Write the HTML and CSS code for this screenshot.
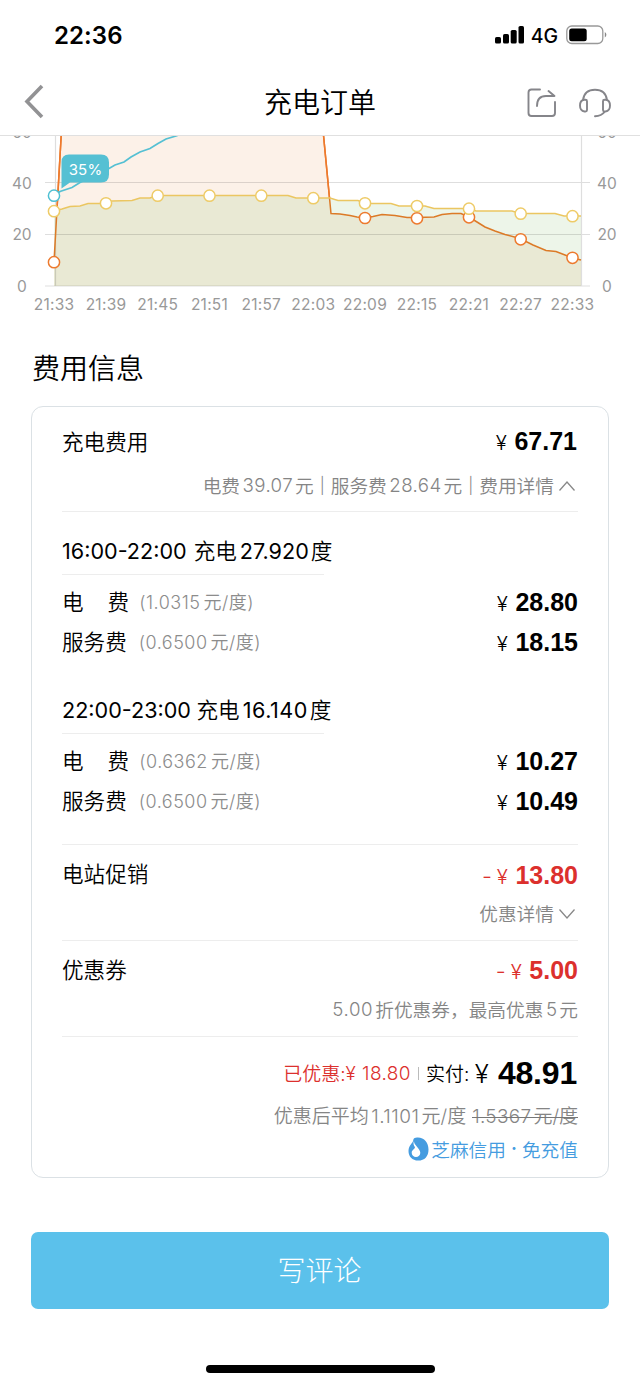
FILE: index.html
```html
<!DOCTYPE html>
<html lang="zh-CN">
<head>
<meta charset="utf-8">
<title>充电订单</title>
<link rel="stylesheet" href="styles.css">
</head>
<body>
<header class="status">
  <span class="clock">22:36</span>
  <span class="status-right">
    <svg width="30" height="20" viewBox="0 0 30 20"><rect x="0" y="12" width="6" height="6.500" rx="1.600"/><rect x="8" y="9" width="6" height="9.500" rx="1.600"/><rect x="15.700" y="5" width="6" height="13.500" rx="1.600"/><rect x="23.500" y="1" width="5.500" height="17.500" rx="1.600"/></svg>
    <span class="network">4G</span>
    <svg class="battery" width="42" height="20" viewBox="0 0 42 20"><rect x=".8" y="1" width="36" height="17.500" rx="5" fill="none" stroke="#999" stroke-width="1.300"/><rect x="3.200" y="3.400" width="17.500" height="12.800" rx="2.500"/><path d="M38.800 7v5.600q1.600-1 1.600-2.800T38.800 7z" fill="#888"/></svg>
  </span>
</header>
<nav class="nav">
  <svg class="back" width="24" height="36" viewBox="0 0 24 36"><path d="M20 3L5 18.500 20 34" fill="none" stroke="#929294" stroke-width="3.600"/></svg>
  <h1>充电订单</h1>
  <div class="nav-icons">
    <svg width="32" height="32" viewBox="0 0 32 32" fill="none" stroke="#85858a" stroke-width="1.900" stroke-linecap="round" stroke-linejoin="round"><path d="M14 2.500H5.500Q2.500 2.500 2.500 5.500V26Q2.500 29 5.500 29H26Q29 29 29 26V15"/><path d="M22.500 4L28.500 9H20Q11 9 11 19"/></svg>
    <svg width="34" height="32" viewBox="0 0 34 32" fill="none" stroke="#85858a" stroke-width="1.900" stroke-linecap="round" stroke-linejoin="round"><path d="M5 13C6 6 11 2.800 17 2.800S28 6 29 13"/><path d="M6 12.700H7.500Q9 12.700 9 14.200V23Q9 24.500 7.500 24.500H6.500Q2 24 2 18.600T6 12.700zM28 12.700H26.500Q25 12.700 25 14.200V23Q25 24.500 26.500 24.500H27.500Q32 24 32 18.600T28 12.700zM27 24.500Q23.500 29 17 29.200"/></svg>
  </div>
</nav>
<main>
<svg class="chart" width="640" height="184" viewBox="0 136 640 184">
  <defs><clipPath id="power"><path d="M54 262L61.500 130H323L331 213.500 340 214 350 215.500 357 217 365 218 373 216.500 382 214.500 395 215.500 407 217.500H417L434 217 442 214.500 452 213.500H461L469 217 477 222 485 227 495 231 505 234.500 520 238.500 533 245 546 250.500 556 251.500 565 255 573 258 581 260V286H54z"/></clipPath></defs>
  <path d="M54 262L61.500 130H323L331 213.500V286H54z" fill="#fcf1e8"/>
  <path d="M54 211L62 209 70 206.500 80 206 88 203.500H106L112 201 132 200.500 140 198H150L157 195.500H288L296 198H330L338 200.500H358L365 203.500H391L399 206H425L434 208.500H470L476 211H512L520 213.500H555L564 216H581V286H54z" fill="#edf5e9"/>
  <path clip-path="url(#power)" d="M54 211L62 209 70 206.500 80 206 88 203.500H106L112 201 132 200.500 140 198H150L157 195.500H288L296 198H330L338 200.500H358L365 203.500H391L399 206H425L434 208.500H470L476 211H512L520 213.500H555L564 216H581V286H54z" fill="#e9e9d4"/>
  <path d="M45 182.500H590M45 234.500H590M45 286H590M55.500 130V286M581.500 130V286" fill="none" stroke="#000" stroke-opacity=".13" stroke-width="1.200"/>
  <path d="M54 262L61.500 130M323 130L331 213.500 340 214 350 215.500 357 217 365 218 373 216.500 382 214.500 395 215.500 407 217.500H417L434 217 442 214.500 452 213.500H461L469 217 477 222 485 227 495 231 505 234.500 520 238.500 533 245 546 250.500 556 251.500 565 255 573 258 581 260" fill="none" stroke="#dc7a27" stroke-width="1.500"/>
  <path d="M57 209L61.500 130M323 130L329.500 198" fill="none" stroke="#f0792d" stroke-width="1.500"/>
  <g class="dot orange"><circle cx="54" cy="262.200" r="5.600"/><circle cx="365" cy="218" r="5.600"/><circle cx="417" cy="218.300" r="5.600"/><circle cx="469" cy="217.300" r="5.600"/><circle cx="520.700" cy="239.300" r="5.600"/><circle cx="572.500" cy="257.800" r="5.600"/></g>
  <path d="M54 211L62 209 70 206.500 80 206 88 203.500H106L112 201 132 200.500 140 198H150L157 195.500H288L296 198H330L338 200.500H358L365 203.500H391L399 206H425L434 208.500H470L476 211H512L520 213.500H555L564 216H581" fill="none" stroke="#ebc661" stroke-width="1.600"/>
  <path d="M54 195.500L60 191.500 72 187.500 80 182.500 109 168.500 115 165 124 162 131 157 140 152 150 148.500 158 143.500 166 139 176 136 184 133" fill="none" stroke="#55c0d3" stroke-width="1.700"/>
  <g class="dot yellow"><circle cx="54" cy="211.200" r="5.600"/><circle cx="106" cy="203.300" r="5.600"/><circle cx="157.700" cy="195.700" r="5.600"/><circle cx="209.500" cy="195.700" r="5.600"/><circle cx="261.300" cy="195.700" r="5.600"/><circle cx="313.300" cy="198.200" r="5.600"/><circle cx="365" cy="203.300" r="5.600"/><circle cx="417" cy="206" r="5.600"/><circle cx="469" cy="208.700" r="5.600"/><circle cx="520.700" cy="213.700" r="5.600"/><circle cx="572.500" cy="216.200" r="5.600"/></g>
  <g class="dot teal"><circle cx="54" cy="195.700" r="5.600"/></g>
  <path d="M69 154.500H101Q109 154.500 109 162.500V174.500Q109 182.500 101 182.500H70L61.500 188.500V162Q61.500 154.500 69 154.500z" fill="#55c0d3"/>
  <text class="tip" x="85.500" y="175">35%</text>
  <g class="axis"><text x="22" y="137.500">60</text><text x="607" y="137.500">60</text><text x="22" y="188.500">40</text><text x="22" y="240.300">20</text><text x="22" y="292">0</text><text x="607" y="188.500">40</text><text x="607" y="240.300">20</text><text x="607" y="292">0</text></g>
  <g class="axis time"><text x="54" y="310">21:33</text><text x="106" y="310">21:39</text><text x="157.700" y="310">21:45</text><text x="209.500" y="310">21:51</text><text x="261.300" y="310">21:57</text><text x="313.300" y="310">22:03</text><text x="365" y="310">22:09</text><text x="417" y="310">22:15</text><text x="469" y="310">22:21</text><text x="520.700" y="310">22:27</text><text x="572.500" y="310">22:33</text></g>
</svg>
<h2>费用信息</h2>
<section class="card">
  <div class="row first"><span class="label">充电费用</span><span class="price one"><i>¥</i><b>67.71</b></span></div>
  <div class="note fee">电费<span class="num">39.07</span>元<span class="bar">|</span>服务费<span class="num">28.64</span>元<span class="bar">|</span>费用详情<svg class="chev" width="18" height="12" viewBox="0 0 18 12"><path d="M1.500 10.500L9 2 16.500 10.500"/></svg></div>
  <hr>
  <div class="period"><span class="range r1">16:00-22:00</span>充电<span class="kwh k1">27.920</span>度</div>
  <div class="row"><span class="label"><span class="wide">电</span>费</span><span class="rate near">(1.0315<span class="unit">元/度)</span></span><span class="price"><i>¥</i><b>28.80</b></span></div>
  <div class="row"><span class="label">服务费</span><span class="rate">(0.6500<span class="unit">元/度)</span></span><span class="price"><i>¥</i><b>18.15</b></span></div>
  <div class="period second"><span class="range r2">22:00-23:00</span>充电<span class="kwh k2">16.140</span>度</div>
  <div class="row"><span class="label"><span class="wide">电</span>费</span><span class="rate near">(0.6362<span class="unit">元/度)</span></span><span class="price"><i>¥</i><b>10.27</b></span></div>
  <div class="row"><span class="label">服务费</span><span class="rate">(0.6500<span class="unit">元/度)</span></span><span class="price"><i>¥</i><b>10.49</b></span></div>
  <hr class="after-list">
  <div class="row deal"><span class="label">电站促销</span><span class="price red promo"><em>-</em><i>¥</i><b>13.80</b></span></div>
  <div class="note">优惠详情<svg class="chev" width="18" height="12" viewBox="0 0 18 12"><path d="M1.500 1.500L9 10 16.500 1.500"/></svg></div>
  <hr class="after-note">
  <div class="row deal"><span class="label">优惠券</span><span class="price red"><em>-</em><i>¥</i><b>5.00</b></span></div>
  <div class="note coupon"><span class="num lead">5.00</span>折优惠券，最高优惠<span class="num">5</span>元</div>
  <hr class="after-note">
  <div class="total"><span class="saved">已优惠:</span><span class="saved amount">¥ 18.80</span><span class="sep"></span><span class="pay">实付:</span><i>¥</i><b>48.91</b></div>
  <div class="average"><span>优惠后平均<span class="num">1.1101</span>元/度</span><s><span class="num lead">1.5367</span>元/度</s></div>
  <div class="credit"><svg width="21" height="24" viewBox="0 0 21 24"><path d="M9 .6C16 .1 20.500 5.500 20.500 12.500S16.500 23.600 10.300 23.600.5 19.500.5 14C.5 8 5 6.500 5.400 2.500 6 1.300 7 .7 9 .6z" fill="#459ce0"/><path d="M6 4C5.600 8 12.300 11.500 12.300 15.700A4.300 4.300 0 0 1 3.700 15.700C3.700 13 6.500 12.500 7 10.200 5.500 8.500 5 6 6 4z" fill="#fff"/></svg>芝麻信用<span class="mid">·</span>免充值</div>
</section>
<button class="review">写评论</button>
</main>
<div class="home"></div>
</body>
</html>
```

FILE: styles.css
```css
* { box-sizing: border-box; }
body {
  margin: 0;
  height: 1385px;
  background: #fff;
  color: #000;
  font-family: Inter, "Noto Sans CJK SC", sans-serif;
  overflow: hidden;
}
svg { display: block; flex: none; }
i, em { font-style: normal; }
.status { height: 70px; padding: 0 32px 0 54px; display: flex; align-items: center; justify-content: space-between; }
.clock { font-size: 24px; font-weight: 600; letter-spacing: .1px; }
.status-right { display: flex; align-items: center; }
.network { font-size: 19.5px; font-weight: 450; margin: 0 8px 0 6px; padding-top: 1px; }
.nav { height: 66px; border-bottom: 1px solid #e0e0e0; padding: 0 28px 0 22px; display: grid; grid-template-columns: 1fr auto 1fr; align-items: center; }
.back { margin-bottom: 3px; }
.nav h1 { margin: 0; padding-left: 6px; font-size: 28px; font-weight: 350; line-height: 40px; }
.nav-icons { display: flex; gap: 20px; justify-content: flex-end; }
.dot { fill: #fff; stroke-width: 1.5; }
.orange { stroke: #ed7a2e; }
.yellow { stroke: #eecb67; }
.teal { stroke: #4fc0d3; }
.tip { fill: #fff; font-size: 15px; text-anchor: middle; letter-spacing: .2px; }
.axis { fill: #999; font-size: 15.5px; text-anchor: middle; }
.time { letter-spacing: .25px; }
h2 { margin: 0 0 0 32px; height: 86px; padding-top: 6px; line-height: 86px; font-size: 28px; font-weight: 350; }
.card { margin: 0 31px; height: 772px; border: 1px solid #dbe1e5; border-radius: 12px; padding: 12px 30px 0; }
.row { height: 40px; display: flex; align-items: center; font-size: 21.6px; }
.row.first { height: 45px; }
.row.deal { margin-top: 9px; }
.label { padding-bottom: 3px; font-weight: 350; }
.wide { margin-right: 24px; }
.rate { margin-left: 12px; padding-bottom: 2px; font-size: 18px; font-weight: 350; color: #8c8c8c; letter-spacing: .5px; }
.near { margin-left: 10px; }
.unit { margin-left: 3px; }
.price { margin-left: auto; padding-top: 2px; display: flex; align-items: baseline; font: 700 25px/30px "Liberation Sans", sans-serif; }
.first .price { padding-top: 1px; }
.price i, .price em { font: 350 20.5px/30px Inter, sans-serif; margin-right: 7.5px; }
.price em { font-size: 22px; margin-right: 5px; }
.price.one { margin-right: 1px; }
.promo { padding-top: 4px; }
.red { color: #dc302d; }
.note { height: 40px; padding-bottom: 3px; display: flex; align-items: center; justify-content: flex-end; color: #858585; font-size: 18.7px; font-weight: 350; }
.fee { height: 44px; margin-bottom: 3px; }
.num { margin: 0 2px 0 2.5px; padding-top: 2px; letter-spacing: .3px; }
.fee .num { letter-spacing: .4px; }
.lead { margin-left: 0; }
.coupon .lead { letter-spacing: .6px; margin-right: 2px; }
.bar { margin: 0 6px; font-size: 16px; }
.chev { margin: 2px 2px 0 4px; fill: none; stroke: #888; stroke-width: 1.3; }
hr { height: 1px; margin: 0; border: 0; background: #ededed; }
.after-list { margin-top: 23px; }
.after-note { margin-top: 6px; }
.period { width: 262px; height: 47px; margin: 16px 0 7px; padding-bottom: 3px; border-bottom: 1px solid #ededed; display: flex; align-items: center; white-space: nowrap; font-size: 21.6px; font-weight: 350; }
.second { margin-top: 25px; }
.range, .kwh { padding-top: 3px; font-weight: 380; }
.range { margin-right: 7px; }
.r2 { margin-right: 5.5px; }
.kwh { margin: 0 2px 0 3px; }
.k2 { letter-spacing: .5px; }
.total { height: 48px; margin-top: 12px; display: flex; align-items: center; justify-content: flex-end; font-size: 18.7px; font-weight: 350; }
.saved, .pay { padding-bottom: 1px; }
.pay { font-size: 19px; }
.saved { color: #dc302d; font-size: 19px; }
.amount { padding: 1px 0 0; letter-spacing: .4px; }
.sep { width: 1px; height: 13px; background: #bbb; margin: 0 7px; }
.total i { font-size: 26px; margin: 0 9px 0 5.5px; }
.total b { font: 700 32px/48px "Liberation Sans", sans-serif; margin-right: 1px; letter-spacing: -.2px; }
.average { height: 36px; padding-bottom: 2px; display: flex; align-items: center; justify-content: flex-end; gap: 6px; color: #858585; font-size: 19px; font-weight: 350; }
.average .num { letter-spacing: .5px; }
.average s .num { letter-spacing: .3px; }
.average s { position: relative; text-decoration: none; }
.average s::after { content: ""; position: absolute; left: 0; right: 0; top: 16px; height: 1px; background: #777; }
.credit { height: 34px; display: flex; align-items: center; justify-content: flex-end; padding-bottom: 3px; color: #459ce0; font-size: 18.7px; font-weight: 350; }
.credit svg { margin: 1px 2px 0 0; }
.mid { margin: 0 5px; font-weight: 600; }
.review { display: block; width: 578px; height: 77px; margin: 54px 31px 0; border: 0; border-radius: 7px; background: #5bc1eb; color: #fff; font: 300 28px/77px Inter, "Noto Sans CJK SC", sans-serif; padding: 1px 1px 0 0; }
.home { width: 229px; height: 8px; margin: 56px auto 0; background: #000; border-radius: 4px; }
```
